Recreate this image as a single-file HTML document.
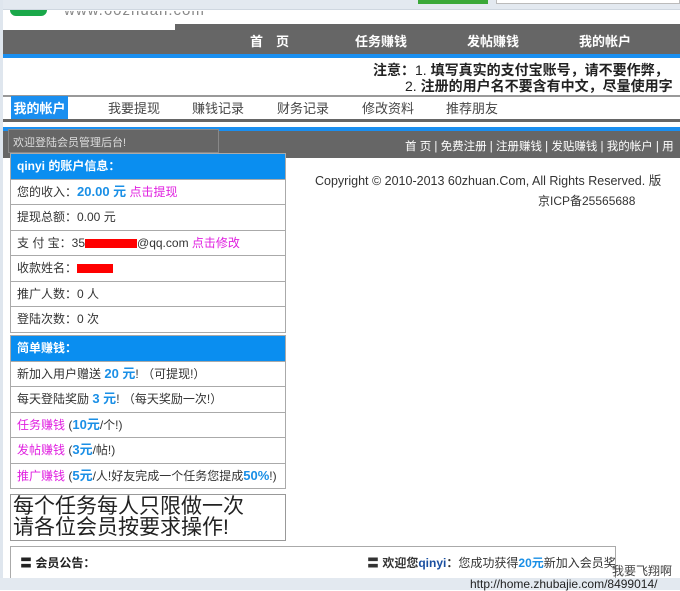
<!DOCTYPE html><html><head><meta charset="utf-8"><style>
*{margin:0;padding:0;box-sizing:border-box}
body{width:680px;height:590px;overflow:hidden;background:#fff;font-family:"Liberation Sans","Noto Sans CJK SC",sans-serif;font-size:12px;color:#333;position:relative}
.a{position:absolute}
.nav span{position:absolute;top:31px;color:#fff;font-weight:bold;font-size:13px}
.tab{position:absolute;top:98px;font-size:13px;color:#444}
.box{position:absolute;left:10px;width:276px;border:1px solid #aaa;border-bottom:none}
.row{height:25.5px;line-height:24px;padding-left:6px;font-size:12px;background:#fff;border-bottom:1px solid #aaa;white-space:nowrap}
.hd{background:#0a8ef0;color:#fff;font-weight:bold;font-size:12px}
.b{color:#1a8fe6;font-weight:bold}
.m{color:#e020e0}
.red{display:inline-block;background:#f00;height:9px;vertical-align:middle}
</style></head><body>
<div class="a" style="left:0;top:0;width:680px;height:10px;background:#e3e9f0;border-bottom:1px solid #cfd7e0"></div>
<div class="a" style="left:418px;top:0;width:70px;height:4px;background:#3aa838"></div>
<div class="a" style="left:496px;top:0;width:184px;height:4px;background:#fff;border:1px solid #bbb;border-top:none"></div>
<div class="a" style="left:10px;top:10px;width:37px;height:6px;background:#1aa84a;border-radius:0 0 18px 18px"></div>
<div class="a" style="left:64px;top:11px;width:170px;height:5px;overflow:hidden"><div style="margin-top:-9px;color:#888;font-size:15px;letter-spacing:1px;white-space:nowrap">www.60zhuan.com</div></div>
<div class="a" style="left:0;top:0;width:3px;height:590px;background:#dfe6ee"></div>
<div class="a" style="left:3px;top:30px;width:677px;height:24px;background:#666"></div>
<div class="a" style="left:175px;top:24px;width:505px;height:8px;background:#666"></div>
<div class="nav"><span style="left:250px">首　页</span><span style="left:355px">任务赚钱</span><span style="left:467px">发帖赚钱</span><span style="left:579px">我的帐户</span></div>
<div class="a" style="left:3px;top:54px;width:677px;height:4px;background:#1a8ff0"></div>
<div class="a" style="left:373px;top:60px;font-weight:bold;font-size:14px;white-space:nowrap;color:#222">注意：<span style="font-weight:normal">1.</span> 填写真实的支付宝账号，请不要作弊，</div>
<div class="a" style="left:405px;top:76px;font-weight:bold;font-size:14px;white-space:nowrap;color:#222"><span style="font-weight:normal">2.</span> 注册的用户名不要含有中文，尽量使用字</div>
<div class="a" style="left:3px;top:95px;width:677px;height:2px;background:#999"></div>
<div class="a" style="left:11px;top:96px;width:57px;height:23px;background:#1a8ff0;color:#fff;font-weight:bold;font-size:13px;padding:2px 0 0 0;text-align:center;white-space:nowrap">我的帐户</div>
<div class="tab" style="left:108px">我要提现</div><div class="tab" style="left:192px">赚钱记录</div><div class="tab" style="left:277px">财务记录</div><div class="tab" style="left:362px">修改资料</div><div class="tab" style="left:446px">推荐朋友</div>
<div class="a" style="left:3px;top:119px;width:677px;height:3px;background:#666"></div>
<div class="a" style="left:3px;top:127px;width:677px;height:4px;background:#1a8ff0"></div>
<div class="a" style="left:3px;top:131px;width:677px;height:27px;background:#666"></div>
<div class="a" style="left:8px;top:129px;width:211px;height:24px;background:#666;border:1px solid #888;color:#ddd;font-size:11px;padding:4px 0 0 4px">欢迎登陆会员管理后台!</div>
<div class="a" style="left:405px;top:138px;color:#fff;font-size:11.5px;white-space:nowrap">首 页 | 免费注册 | 注册赚钱 | 发贴赚钱 | 我的帐户 | 用</div>
<div class="a" style="left:315px;top:170px;font-size:12.5px;white-space:nowrap">Copyright © 2010-2013 60zhuan.Com, All Rights Reserved. 版</div>
<div class="a" style="left:538px;top:192px;font-size:12px">京ICP备25565688</div>

<div class="box" style="top:153px">
<div class="row hd">qinyi 的账户信息：</div>
<div class="row">您的收入：<span class="b" style="font-size:13px">20.00 元</span> <span class="m">点击提现</span></div>
<div class="row">提现总额：0.00 元</div>
<div class="row">支 付 宝：35<span class="red" style="width:52px"></span>@qq.com <span class="m">点击修改</span></div>
<div class="row">收款姓名：<span class="red" style="width:36px"></span></div>
<div class="row">推广人数：0 人</div>
<div class="row">登陆次数：0 次</div>
</div>

<div class="box" style="top:335px">
<div class="row hd">简单赚钱：</div>
<div class="row">新加入用户赠送 <span class="b" style="font-size:13px">20 元</span>! （可提现!）</div>
<div class="row">每天登陆奖励 <span class="b" style="font-size:13px">3 元</span>! （每天奖励一次!）</div>
<div class="row"><span class="m">任务赚钱</span> (<span class="b" style="font-size:13px">10元</span>/个!)</div>
<div class="row"><span class="m">发帖赚钱</span> (<span class="b" style="font-size:13px">3元</span>/帖!)</div>
<div class="row"><span class="m">推广赚钱</span> (<span class="b" style="font-size:13px">5元</span>/人!好友完成一个任务您提成<span class="b" style="font-size:13px">50%</span>!)</div>
</div>

<div class="a" style="left:10px;top:494px;width:276px;height:47px;border:1px solid #999;font-size:21px;line-height:21px;padding:1px 0 0 2px;color:#222">每个任务每人只限做一次<br>请各位会员按要求操作!</div>

<div class="a" style="left:10px;top:546px;width:606px;height:40px;border:1px solid #aaa"></div>
<div class="a" style="left:20px;top:554px;font-weight:bold;font-size:12px;color:#222">〓 会员公告：</div>
<div class="a" style="left:367px;top:554px;font-size:12px;white-space:nowrap"><b>〓 欢迎您<span style="color:#1a4fa0">qinyi</span>：</b>您成功获得<span class="b">20元</span>新加入会员奖</div>
<div class="a" style="left:0;top:578px;width:680px;height:12px;background:#e3e9f0"></div>
<div class="a" style="left:612px;top:562px;font-size:12px;color:#444">我要飞翔啊</div>
<div class="a" style="left:470px;top:577px;font-size:12px;color:#222">http://home.zhubajie.com/8499014/</div>
</body></html>
